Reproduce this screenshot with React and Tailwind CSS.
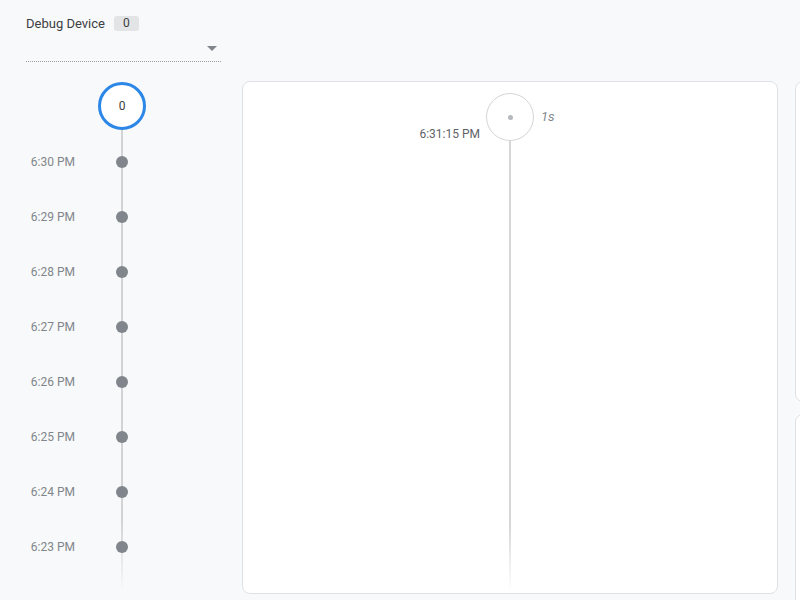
const times = ['6:30 PM', '6:29 PM', '6:28 PM', '6:27 PM', '6:26 PM', '6:25 PM', '6:24 PM', '6:23 PM'];

const DeviceHeader = () => (
  <div className="pl-[26px] pt-[14px]">
    <div className="flex items-center gap-[9px]">
      <span className="text-[13px] text-[#3c4043]">Debug Device</span>
      <span className="rounded-[3px] bg-[#e3e4e6] px-[9px] text-[12px] leading-[15px] text-[#3c4043]">0</span>
    </div>
    <div className="mt-[6px] flex h-[22px] w-[195px] items-center justify-end border-b border-dotted border-[#9aa0a6] pr-[4px]">
      <span className="mb-[4px] h-0 w-0 border-x-[5px] border-t-[5px] border-x-transparent border-t-[#80868b]" />
    </div>
  </div>
);

const MinuteTimeline = () => (
  <div className="relative mt-[20px]">
    <div className="absolute left-[121px] top-[48px] h-[461px] w-[2px] bg-gradient-to-b from-[#d2d3d5] from-85% to-transparent" />
    <div className="relative flex">
      <div className="w-[98px]" />
      <div className="flex h-[48px] w-[48px] items-center justify-center rounded-full border-[3px] border-[#2d87e6] bg-white text-[12px] text-[#3c4043]">
        0
      </div>
    </div>
    <div className="relative mt-[5px] flex flex-col">
      {times.map((t) => (
        <div key={t} className="flex h-[55px] items-center">
          <span className="w-[75px] text-right text-[12px] text-[#80868b]">{t}</span>
          <div className="flex w-[94px] justify-center">
            <span className="h-[12px] w-[12px] rounded-full bg-[#80868b]" />
          </div>
        </div>
      ))}
    </div>
  </div>
);

const EventCard = () => (
  <div className="flex h-[513px] w-[536px] shrink-0 flex-col items-center rounded-[8px] border border-[#dfe1e5] bg-white pt-[11px]">
    <div className="relative">
      <div className="flex h-[48px] w-[48px] items-center justify-center rounded-full border-[1.5px] border-[#d3d5d8] bg-white">
        <span className="h-[5px] w-[5px] rounded-full bg-[#b5b8bc]" />
      </div>
      <span className="absolute left-[55px] top-[14px] text-[13px] italic text-[#80868b]">1s</span>
      <span className="absolute right-[54px] top-[32px] whitespace-nowrap text-[12px] text-[#5f6368]">6:31:15 PM</span>
    </div>
    <div className="h-[450px] w-[2px] bg-gradient-to-b from-[#d5d6d8] from-85% to-transparent" />
  </div>
);

export default function App() {
  return (
    <div
      className="flex h-[600px] w-[800px] overflow-hidden bg-[#f8f9fa]"
      style={{ fontFamily: 'Roboto, "Noto Sans", sans-serif' }}
    >
      <div className="w-[242px] shrink-0">
        <DeviceHeader />
        <MinuteTimeline />
      </div>
      <div className="mt-[81px] flex gap-[17px]">
        <EventCard />
        <div className="flex w-[300px] shrink-0 flex-col gap-[12px]">
          <div className="h-[321px] shrink-0 rounded-[8px] border border-[#dfe1e5] bg-white" />
          <div className="h-[300px] shrink-0 rounded-[8px] border border-[#dfe1e5] bg-white" />
        </div>
      </div>
    </div>
  );
}
